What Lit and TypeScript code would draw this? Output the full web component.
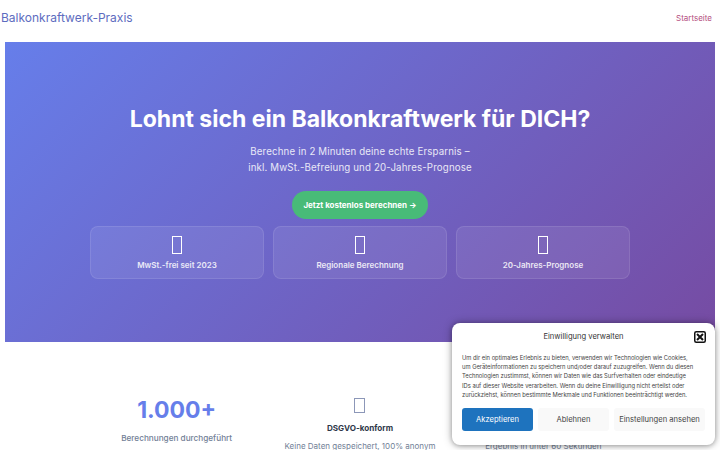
import { LitElement, html, css } from "lit";
import { customElement } from "lit/decorators.js";

@customElement("app-root")
export class AppRoot extends LitElement {
  static styles = css`
    :host { display: block; width: 720px; height: 450px; overflow: hidden; position: relative; background: #fff; font-family: Inter, "Liberation Sans", sans-serif; color: #2d3748; }
    * { box-sizing: border-box; }
    .top { height: 42px; display: flex; justify-content: space-between; align-items: center; padding: 0 8px 7px 1px; }
    .brand { font-size: 12px; color: #5d6cc0; }
    .nav { font-size: 8px; color: #b5507f; }
    .hero { margin: 0 5px; height: 300px; background: linear-gradient(135deg, #667eea 0%, #764ba2 100%); color: #fff; display: flex; flex-direction: column; align-items: center; padding-top: 62px; }
    h1 { margin: 0; font-size: 23px; line-height: 30px; font-weight: 700; }
    .sub { margin: 10px 0 0; font-size: 9.7px; line-height: 16px; text-align: center; opacity: .85; letter-spacing: .15px; }
    .cta { margin-top: 15px; width: 136px; height: 28px; border-radius: 14px; background: #48bb78; display: flex; align-items: center; justify-content: center; font-size: 8px; font-weight: 700; }
    .features { margin-top: 7px; display: grid; grid-template-columns: repeat(3, 174px); gap: 9px; }
    .feature { height: 53px; border-radius: 8px; background: rgba(255,255,255,.08); border: 1px solid rgba(255,255,255,.1); display: flex; flex-direction: column; align-items: center; padding-top: 9px; }
    .tofu { display: block; width: 10px; height: 18px; border: 1px solid currentColor; }
    .feature span.label { margin-top: 5px; font-size: 8px; line-height: 12px; font-weight: 600; opacity: .85; }
    .stats { padding: 55px 85px 0; display: grid; grid-template-columns: repeat(3, 1fr); text-align: center; }
    .stat { display: flex; flex-direction: column; align-items: center; }
    .num { font-size: 23px; line-height: 28px; font-weight: 700; color: #667eea; margin-top: -1px; }
    .muted { font-size: 8.2px; line-height: 12px; color: #718096; font-weight: 500; margin-top: 8px; white-space: nowrap; }
    .stat .tofu { color: #8c97b8; margin-top: 1px; height: 15px; width: 11px; }
    .stat h3 { margin: 9px 0 0; font-size: 8.1px; line-height: 12px; font-weight: 700; color: #2d3748; }
    .light { font-size: 8px; line-height: 12px; color: #718096; margin-top: 6px; white-space: nowrap; font-weight: 400; }
    .modal { position: absolute; left: 452px; top: 323px; width: 263px; height: 122px; background: #fff; border-radius: 8px; box-shadow: 0 0 8px rgba(0,0,0,.35), 0 1px 4px rgba(0,0,0,.2); padding: 9px 10px; }
    .mhead { display: flex; align-items: center; justify-content: center; height: 10px; font-size: 7.6px; color: #333; font-weight: 400; position: relative; line-height: 10px; }
    .close { position: absolute; right: -1px; top: -1px; width: 12px; height: 12px; }
    .mtext { margin: 11px 0 0; font-size: 5.8px; line-height: 9.2px; color: #444; white-space: nowrap; }
    .btns { display: flex; gap: 5px; margin-top: 9px; }
    .btn { flex: 1 1 0; height: 23px; border-radius: 3px; background: #f9f9f9; display: flex; align-items: center; justify-content: center; font-size: 7.6px; color: #444; white-space: nowrap; }
    .btn.a { background: #1e73be; color: #fff; flex: 0 0 71px; }
    .btn.b { flex: 0 0 71px; }
  `;
  render() {
    return html`
      <div class="top"><div class="brand">Balkonkraftwerk-Praxis</div><div class="nav">Startseite</div></div>
      <section class="hero">
        <h1>Lohnt sich ein Balkonkraftwerk für DICH?</h1>
        <p class="sub">Berechne in 2 Minuten deine echte Ersparnis –<br />inkl. MwSt.-Befreiung und 20-Jahres-Prognose</p>
        <div class="cta">Jetzt kostenlos berechnen →</div>
        <div class="features">
          ${["MwSt.-frei seit 2023", "Regionale Berechnung", "20-Jahres-Prognose"].map(
            (t) => html`<div class="feature"><i class="tofu"></i><span class="label">${t}</span></div>`
          )}
        </div>
      </section>
      <section class="stats">
        <div class="stat"><div class="num">1.000+</div><div class="muted">Berechnungen durchgeführt</div></div>
        <div class="stat"><i class="tofu"></i><h3>DSGVO-konform</h3><div class="light">Keine Daten gespeichert, 100% anonym</div></div>
        <div class="stat"><i class="tofu"></i><h3>Sofort-Ergebnis</h3><div class="light">Ergebnis in unter 60 Sekunden</div></div>
      </section>
      <aside class="modal">
        <div class="mhead">Einwilligung verwalten
          <svg class="close" viewBox="0 0 12 12"><rect x="0.75" y="0.75" width="10.5" height="10.5" rx="1.5" fill="none" stroke="#111" stroke-width="1.5"/><path d="M3 3l6 6M9 3l-6 6" stroke="#111" stroke-width="2"/></svg>
        </div>
        <p class="mtext">Um dir ein optimales Erlebnis zu bieten, verwenden wir Technologien wie Cookies,<br />um Geräteinformationen zu speichern und/oder darauf zuzugreifen. Wenn du diesen<br />Technologien zustimmst, können wir Daten wie das Surfverhalten oder eindeutige<br />IDs auf dieser Website verarbeiten. Wenn du deine Einwilligung nicht erteilst oder<br />zurückziehst, können bestimmte Merkmale und Funktionen beeinträchtigt werden.</p>
        <div class="btns"><div class="btn a">Akzeptieren</div><div class="btn b">Ablehnen</div><div class="btn">Einstellungen ansehen</div></div>
      </aside>
    `;
  }
}
